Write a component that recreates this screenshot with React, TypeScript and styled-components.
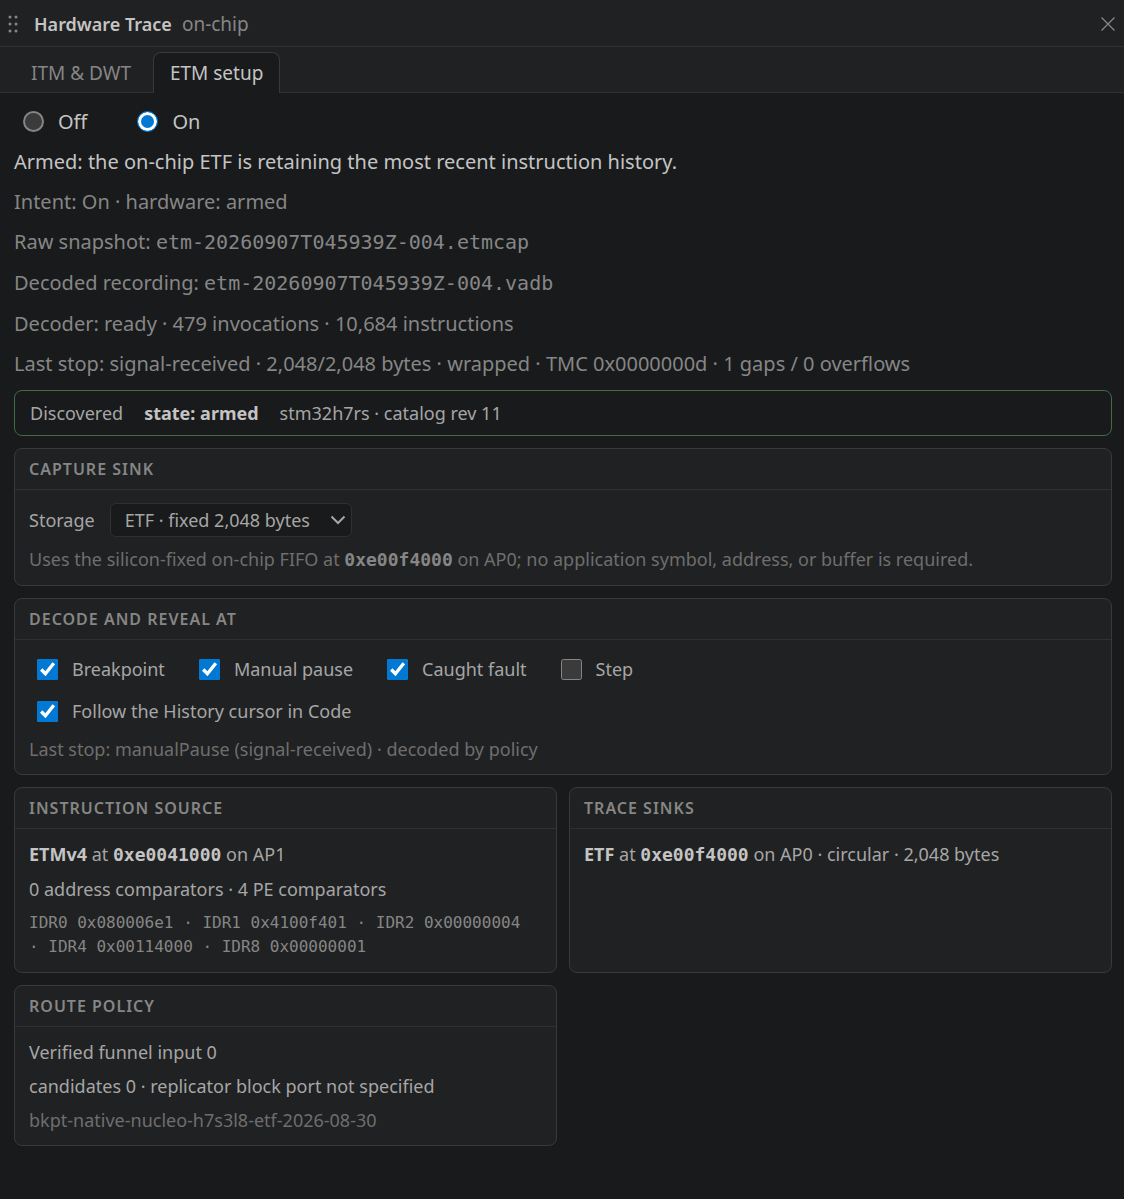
import React from "react";
import styled, { createGlobalStyle } from "styled-components";

const sans = '"Noto Sans", "Open Sans", sans-serif';
const mono = '"DejaVu Sans Mono", monospace';

const color = {
  page: "#191a1b",
  panel: "#202122",
  line: "#2e3031",
  cardLine: "#37393a",
  strong: "#c4c4c4",
  text: "#a6a6a6",
  muted: "#868686",
  faint: "#6e6e6e",
  accent: "#0078d4",
  armed: "#3f6b4a",
};

const GlobalStyle = createGlobalStyle`
  *, *::before, *::after { box-sizing: border-box; }
  html { color-scheme: dark; background: ${color.page}; }
  body { margin: 0; font-family: ${sans}; font-size: 18px; line-height: 24px; color: ${color.text}; }
  p, h1, h2 { margin: 0; }
`;

const Shell = styled.div`
  min-height: 100vh;
  background: ${color.page};
`;

const TitleBar = styled.header`
  display: flex;
  align-items: center;
  height: 47px;
  padding: 1px 8px 0;
  background: ${color.panel};
  border-bottom: 1px solid ${color.line};
`;

const Grip = styled.svg`
  width: 10px;
  height: 20px;
  margin-right: 16px;
  fill: ${color.muted};
`;

const Title = styled.h1`
  font-size: 18px;
  font-weight: 600;
  color: ${color.strong};
`;

const Subtitle = styled.span`
  margin-left: 10px;
  font-size: 19px;
  color: ${color.muted};
`;

const CloseButton = styled.button`
  display: flex;
  margin-left: auto;
  padding: 0;
  border: 0;
  background: none;
  color: ${color.muted};
  svg { width: 16px; height: 16px; }
`;

const TabBar = styled.nav`
  display: flex;
  align-items: flex-end;
  gap: 5px;
  height: 46px;
  padding: 0 14px;
  background: ${color.panel};
  box-shadow: inset 0 -1px ${color.line};
`;

const Tab = styled.button<{ $active?: boolean }>`
  height: 41px;
  padding: 0 16px;
  border: 1px solid ${(p) => (p.$active ? color.cardLine : "transparent")};
  border-bottom: 0;
  border-radius: 8px 8px 0 0;
  background: ${(p) => (p.$active ? color.page : "transparent")};
  color: ${(p) => (p.$active ? color.strong : color.muted)};
  font: 19px/28px ${sans};
`;

const Content = styled.main`
  display: flex;
  flex-direction: column;
  gap: 12px;
  padding: 14px 12px 14px 14px;
`;

const ModeRow = styled.div`
  display: flex;
  gap: 50px;
  padding-left: 9px;
`;

const Choice = styled.label<{ $large?: boolean }>`
  display: flex;
  align-items: center;
  gap: 14px;
  font-size: ${(p) => (p.$large ? 20 : 18)}px;
  line-height: ${(p) => (p.$large ? 29 : 32)}px;
  color: ${(p) => (p.$large ? color.strong : color.text)};
`;

const Checkbox = styled.input.attrs({ type: "checkbox" })`
  width: 21px;
  height: 21px;
  margin: 0;
  accent-color: ${color.accent};
`;

const Radio = styled.input.attrs({ type: "radio" })`
  appearance: none;
  width: 21px;
  height: 21px;
  margin: 0;
  border: 2px solid #858585;
  border-radius: 50%;
  background: #3b3b3b;

  &:checked {
    border: 1px solid ${color.accent};
    background: ${color.accent};
    box-shadow: inset 0 0 0 3px #fff;
  }
`;

const Status = styled.p<{ $primary?: boolean }>`
  font-size: 20px;
  line-height: 28px;
  color: ${(p) => (p.$primary ? color.strong : color.muted)};
`;

const FileName = styled.code`
  font: 20px/29px ${mono};
`;

const Banner = styled.div`
  display: flex;
  gap: 21px;
  padding: 10px 15px;
  border: 1px solid ${color.armed};
  border-radius: 8px;
  color: ${color.text};
`;

const Strong = styled.strong`
  font-weight: 700;
  color: ${color.strong};
`;

const Grid = styled.div`
  display: grid;
  grid-template-columns: 1fr 1fr;
  gap: 12px;
`;

const Card = styled.section`
  border: 1px solid ${color.cardLine};
  border-radius: 8px;
  background: ${color.panel};
`;

const CardTitle = styled.h2`
  padding: 8px 14px;
  border-bottom: 1px solid ${color.line};
  font-size: 16px;
  font-weight: 600;
  line-height: 24px;
  letter-spacing: 1px;
  text-transform: uppercase;
  color: ${color.muted};
`;

const CardBody = styled.div`
  display: flex;
  flex-direction: column;
  gap: 10px;
  padding: 13px 14px;
`;

const Field = styled.div`
  display: flex;
  align-items: center;
  gap: 15px;
`;

const SelectWrap = styled.div`
  display: grid;
  align-items: center;
  svg {
    grid-area: 1 / 1;
    justify-self: end;
    width: 16px;
    height: 16px;
    margin-right: 6px;
    pointer-events: none;
  }
`;

const Select = styled.select`
  grid-area: 1 / 1;
  appearance: none;
  height: 34px;
  padding: 0 40px 0 14px;
  border: 1px solid ${color.line};
  border-radius: 6px;
  background: ${color.page};
  color: ${color.text};
  font: 18px/24px ${sans};
`;

const ChoiceRow = styled.div`
  display: flex;
  flex-wrap: wrap;
  gap: 12px 34px;
  padding-left: 8px;
`;

const Note = styled.p`
  color: ${color.faint};
`;

const Address = styled.code<{ $muted?: boolean }>`
  font: 700 18px/24px ${mono};
  color: ${(p) => (p.$muted ? color.muted : color.strong)};
`;

const Registers = styled.p`
  font: 16px/24px ${mono};
  color: ${color.muted};
`;

const GripIcon = () => (
  <Grip viewBox="0 0 10 20" aria-hidden="true">
    {[3, 10, 17].map((y) => (
      <React.Fragment key={y}>
        <circle cx="2" cy={y} r="1.5" />
        <circle cx="8" cy={y} r="1.5" />
      </React.Fragment>
    ))}
  </Grip>
);

const stops = [
  { label: "Breakpoint", on: true },
  { label: "Manual pause", on: true },
  { label: "Caught fault", on: true },
  { label: "Step", on: false },
];

const registers = [
  "IDR0 0x080006e1",
  "IDR1 0x4100f401",
  "IDR2 0x00000004",
  "IDR4 0x00114000",
  "IDR8 0x00000001",
];

export default function App() {
  return (
    <Shell>
      <GlobalStyle />
      <TitleBar>
        <GripIcon />
        <Title>Hardware Trace</Title>
        <Subtitle>on-chip</Subtitle>
        <CloseButton aria-label="Close">
          <svg viewBox="0 0 16 16" fill="none" stroke="currentColor" strokeWidth="1.3">
            <path d="M1.5 1.5 14.5 14.5M14.5 1.5 1.5 14.5" />
          </svg>
        </CloseButton>
      </TitleBar>
      <TabBar>
        <Tab>ITM &amp; DWT</Tab>
        <Tab $active>ETM setup</Tab>
      </TabBar>
      <Content>
        <ModeRow>
          <Choice $large>
            <Radio name="mode" />
            Off
          </Choice>
          <Choice $large>
            <Radio name="mode" defaultChecked />
            On
          </Choice>
        </ModeRow>
        <Status $primary>Armed: the on-chip ETF is retaining the most recent instruction history.</Status>
        <Status>Intent: On · hardware: armed</Status>
        <Status>
          Raw snapshot: <FileName>etm-20260907T045939Z-004.etmcap</FileName>
        </Status>
        <Status>
          Decoded recording: <FileName>etm-20260907T045939Z-004.vadb</FileName>
        </Status>
        <Status>Decoder: ready · 479 invocations · 10,684 instructions</Status>
        <Status>
          Last stop: signal-received · 2,048/2,048 bytes · wrapped · TMC 0x0000000d · 1 gaps / 0 overflows
        </Status>
        <Banner>
          <span>Discovered</span>
          <Strong>state: armed</Strong>
          <span>stm32h7rs · catalog rev 11</span>
        </Banner>
        <Card>
          <CardTitle>Capture sink</CardTitle>
          <CardBody>
            <Field>
              <label htmlFor="storage">Storage</label>
              <SelectWrap>
                <Select id="storage">
                  <option>ETF · fixed 2,048 bytes</option>
                </Select>
                <svg viewBox="0 0 16 16" fill="none" stroke="currentColor" strokeWidth="2">
                  <path d="M1.5 4.5 8 11l6.500-6.500" />
                </svg>
              </SelectWrap>
            </Field>
            <Note>
              Uses the silicon-fixed on-chip FIFO at <Address $muted>0xe00f4000</Address> on AP0; no application
              symbol, address, or buffer is required.
            </Note>
          </CardBody>
        </Card>
        <Card>
          <CardTitle>Decode and reveal at</CardTitle>
          <CardBody>
            <ChoiceRow>
              {stops.map((s) => (
                <Choice key={s.label}>
                  <Checkbox defaultChecked={s.on} />
                  {s.label}
                </Choice>
              ))}
            </ChoiceRow>
            <ChoiceRow>
              <Choice>
                <Checkbox defaultChecked />
                Follow the History cursor in Code
              </Choice>
            </ChoiceRow>
            <Note>Last stop: manualPause (signal-received) · decoded by policy</Note>
          </CardBody>
        </Card>
        <Grid>
          <Card>
            <CardTitle>Instruction source</CardTitle>
            <CardBody>
              <p>
                <Strong>ETMv4</Strong> at <Address>0xe0041000</Address> on AP1
              </p>
              <p>0 address comparators · 4 PE comparators</p>
              <Registers>{registers.join(" ·\u00a0")}</Registers>
            </CardBody>
          </Card>
          <Card>
            <CardTitle>Trace sinks</CardTitle>
            <CardBody>
              <p>
                <Strong>ETF</Strong> at <Address>0xe00f4000</Address> on AP0 · circular · 2,048 bytes
              </p>
            </CardBody>
          </Card>
          <Card>
            <CardTitle>Route policy</CardTitle>
            <CardBody>
              <p>Verified funnel input 0</p>
              <p>candidates 0 · replicator block port not specified</p>
              <Note>bkpt-native-nucleo-h7s3l8-etf-2026-08-30</Note>
            </CardBody>
          </Card>
        </Grid>
      </Content>
    </Shell>
  );
}
